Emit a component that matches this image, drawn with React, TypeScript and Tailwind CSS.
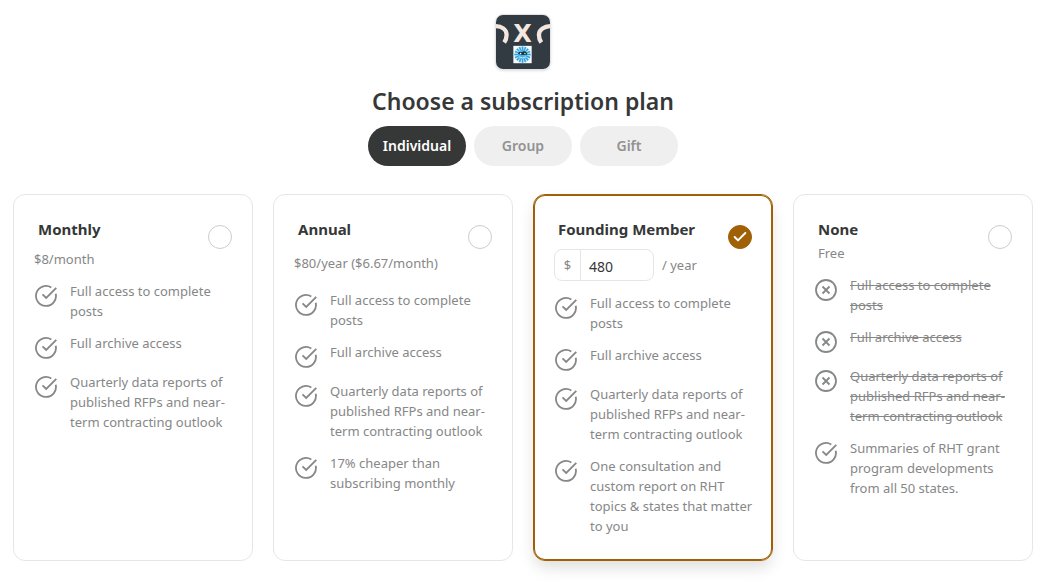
import { useState } from 'react';
import { Check } from 'lucide-react';

type Feature = { text: string; excluded?: boolean };

type Plan = {
  id: string;
  name: string;
  subtitle?: string;
  price?: string;
  custom?: boolean;
  roomy?: boolean;
  features: Feature[];
};

const tabs = ['Individual', 'Group', 'Gift'];

const posts = 'Full access to complete posts';
const archive = 'Full archive access';
const reports = 'Quarterly data reports of published RFPs and near-term contracting outlook';

const plans: Plan[] = [
  {
    id: 'monthly',
    name: 'Monthly',
    price: '$8/month',
    features: [{ text: posts }, { text: archive }, { text: reports }],
  },
  {
    id: 'annual',
    name: 'Annual',
    price: '$80/year ($6.67/month)',
    roomy: true,
    features: [
      { text: posts },
      { text: archive },
      { text: reports },
      { text: '17% cheaper than subscribing monthly' },
    ],
  },
  {
    id: 'founding',
    name: 'Founding Member',
    custom: true,
    features: [
      { text: posts },
      { text: archive },
      { text: reports },
      { text: 'One consultation and custom report on RHT topics & states that matter to you' },
    ],
  },
  {
    id: 'none',
    name: 'None',
    subtitle: 'Free',
    features: [
      { text: posts, excluded: true },
      { text: archive, excluded: true },
      { text: reports, excluded: true },
      { text: 'Summaries of RHT grant program developments from all 50 states.' },
    ],
  },
];

const rays = Array.from({ length: 16 }, (_, i) => i * 22.5);

function Logo() {
  return (
    <svg viewBox="0 0 56 56" className="h-14 w-14 rounded-lg border border-[#e4e4e4] shadow" aria-hidden="true">
      <rect width="56" height="56" fill="#323a42" />
      <g fill="none" stroke="#f3e7df" strokeWidth="4.5">
        <path d="M-2 11.500C6 11.500 11 15 11 20.500C11 24 10 26.500 8.500 28.500" />
        <path d="M58 11.500C50 11.500 44.500 15 44.500 20.500C44.500 24 45.500 26.500 47 28.500" />
      </g>
      <text x="27.500" y="28" textAnchor="middle" fontSize="25" fontWeight="700" fill="#f3e7df" fontFamily="'DejaVu Sans', sans-serif">X</text>
      <rect x="18" y="32" width="19" height="18" fill="#f5fbff" />
      {rays.map((angle) => (
        <path key={angle} d="M26.700 32.800L28.300 32.800L28 36.500L27 36.500Z" fill="#2f9fdc" stroke="#2f9fdc" strokeWidth=".4" transform={`rotate(${angle} 27.500 41)`} />
      ))}
      <circle cx="27.500" cy="41" r="5" fill="#4bb4e6" />
      <path d="M23 40.500C23 37.500 25.500 38.500 27 38.500C29 36.500 32.500 38 32.500 41L27.500 41.500Z" fill="#17324b" />
      <circle cx="25.500" cy="40" r=".8" fill="#fff" />
      <circle cx="30" cy="40" r=".8" fill="#cfe96b" />
      <path d="M24 43.500Q27.500 45.500 31 43.500" fill="none" stroke="#e9f8ff" strokeWidth=".8" />
    </svg>
  );
}

function FeatureIcon({ excluded }: { excluded?: boolean }) {
  return (
    <svg
      viewBox="0 0 24 24"
      className="mt-[3px] h-6 w-6 shrink-0 text-[#868787]"
      fill="none"
      stroke="currentColor"
      strokeWidth="1.8"
      aria-hidden="true"
    >
      {excluded ? (
        <>
          <circle cx="12" cy="12" r="10" />
          <path d="M8.500 8.500L15.500 15.500M15.500 8.500L8.500 15.500" />
        </>
      ) : (
        <>
          <path d="M21.700 9.700A10 10 0 1 1 17.300 3.500" />
          <path d="M8.500 10.300L12.200 14L22.300 3.900" />
        </>
      )}
    </svg>
  );
}

export default function App() {
  const [tab, setTab] = useState('Individual');
  const [selected, setSelected] = useState('founding');
  const [amount, setAmount] = useState('480');

  return (
    <main className="min-h-screen bg-white pt-[14px] pr-[15px] pb-5 pl-[13px] font-['Noto_Sans','Open_Sans',sans-serif] text-[#363737]">
      <header className="flex flex-col items-center">
        <Logo />
        <h1 className="mt-[15px] text-[23px] leading-8 font-[650]">Choose a subscription plan</h1>
        <div className="mt-[9px] flex gap-2">
          {tabs.map((name) => (
            <button
              key={name}
              type="button"
              onClick={() => setTab(name)}
              aria-pressed={tab === name}
              className={`h-10 w-[98px] rounded-full text-sm font-semibold ${
                tab === name ? 'bg-[#363737] text-white' : 'bg-[#efefef] text-[#929292]'
              }`}
            >
              {name}
            </button>
          ))}
        </div>
      </header>

      <div className="mt-7 grid grid-cols-4 gap-5">
        {plans.map((plan) => {
          const isSelected = selected === plan.id;
          return (
            <section
              key={plan.id}
              className={`rounded-xl border px-5 py-6 text-[13px] leading-5 text-[#868787] ${
                isSelected
                  ? 'border-[#a06106] shadow-[inset_0_0_0_1px_#a06106,0_8px_16px_-2px_rgba(0,0,0,0.14)]'
                  : 'border-[#e6e6e6]'
              }`}
            >
              <div className="flex items-start justify-between">
                <div className="pl-1">
                  <label htmlFor={plan.id} className="block pb-1 text-[15px] leading-5 font-bold whitespace-nowrap text-[#363737]">
                    {plan.name}
                  </label>
                  {plan.subtitle && <p>{plan.subtitle}</p>}
                </div>
                <div className="mt-1.5 grid shrink-0">
                  <input
                    type="radio"
                    id={plan.id}
                    name="plan"
                    checked={isSelected}
                    onChange={() => setSelected(plan.id)}
                    className="col-start-1 row-start-1 h-6 w-6 appearance-none rounded-full border border-[#cccccc] checked:border-[#a06106] checked:bg-[#a06106]"
                  />
                  {isSelected && (
                    <Check className="pointer-events-none col-start-1 row-start-1 h-4 w-4 place-self-center text-white" strokeWidth={3} />
                  )}
                </div>
              </div>

              {plan.price && <p className={plan.roomy ? 'mt-1' : ''}>{plan.price}</p>}

              {plan.custom && (
                <div className="flex items-center gap-2">
                  <div className="flex h-8 w-[100px] overflow-hidden rounded-lg border border-[#e6e6e6]">
                    <span className="flex w-[26px] shrink-0 items-center justify-center border-r border-[#e6e6e6]">$</span>
                    <input
                      type="text"
                      aria-label="Amount per year"
                      value={amount}
                      onChange={(e) => setAmount(e.target.value)}
                      className="w-full min-w-0 px-2 pt-1 text-sm text-[#363737] outline-none"
                    />
                  </div>
                  <span>/ year</span>
                </div>
              )}

              <ul className={`flex flex-col gap-3 ${plan.roomy ? 'mt-[17px]' : 'mt-3'}`}>
                {plan.features.map((feature) => (
                  <li key={feature.text} className="-mr-2 flex items-start gap-3">
                    <FeatureIcon excluded={feature.excluded} />
                    <span className={feature.excluded ? 'line-through' : ''}>{feature.text}</span>
                  </li>
                ))}
              </ul>
            </section>
          );
        })}
      </div>
    </main>
  );
}
